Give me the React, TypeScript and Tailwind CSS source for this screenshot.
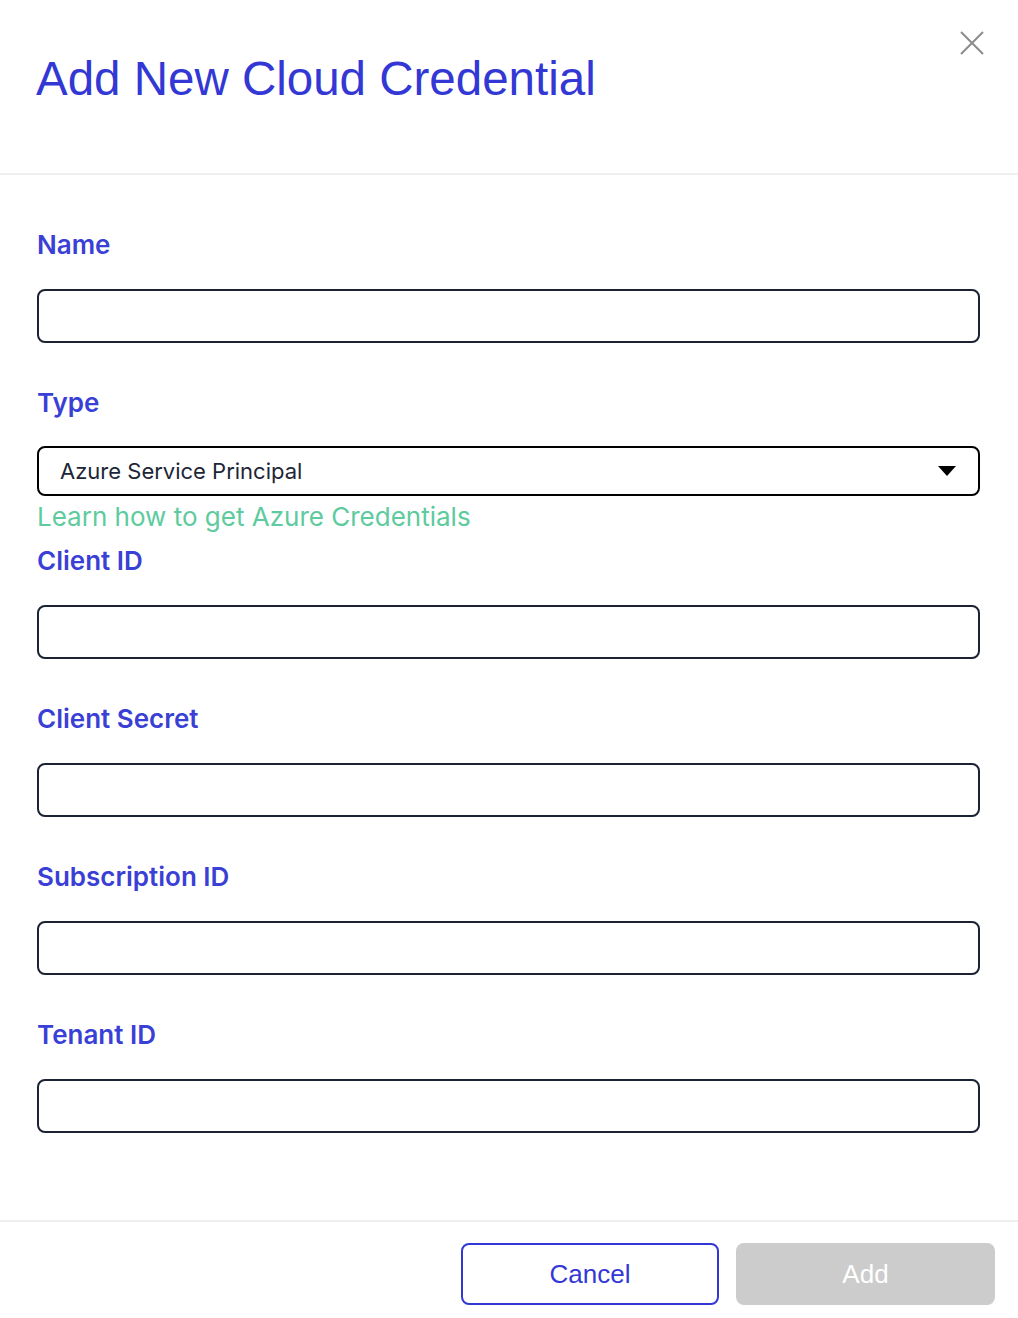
const fields = ["Client ID", "Client Secret", "Subscription ID", "Tenant ID"];

const labelCls =
  "pt-[3px] font-['Inter',sans-serif] text-[26px] font-semibold leading-8 text-[#3a3fd6]";

function TextInput() {
  return (
    <input
      type="text"
      className="block h-[54px] w-full rounded-lg border-2 border-[#1a2233] bg-white px-5 outline-none"
    />
  );
}

export default function App() {
  return (
    <div className="flex min-h-[1318px] w-full flex-col bg-white">
      <div className="relative h-[175px] border-b-2 border-[#efefef] pl-[36px] pt-[55px]">
        <h1 className="font-['Liberation_Sans',Arial,sans-serif] text-[47.5px] leading-none text-[#3338d5]">
          Add New Cloud Credential
        </h1>
        <button
          aria-label="Close"
          className="absolute right-[34px] top-[31px] text-[#8c8c8c]"
        >
          <svg width="24" height="24" viewBox="0 0 24 24" stroke="currentColor" strokeWidth="2">
            <path d="M1 1l22 22M23 1L1 23" />
          </svg>
        </button>
      </div>

      <div className="flex-1 pl-[37px] pr-[38px] pt-[51px]">
        <div className="mb-[41px]">
          <div className={`mb-[28px] ${labelCls}`}>Name</div>
          <TextInput />
        </div>

        <div className="mb-[9px]">
          <div className={`mb-[27px] ${labelCls}`}>Type</div>
          <div className="flex h-[50px] w-full items-center justify-between rounded-lg border-2 border-black pl-[21px] pr-[22px]">
            <span className="font-['Inter',sans-serif] text-[22px] text-[#1c2636]">
              Azure Service Principal
            </span>
            <svg width="18" height="11" viewBox="0 0 18 11">
              <path d="M0 0h18L9 10z" fill="#000" />
            </svg>
          </div>
          <a className="mt-[5px] block font-['Inter',sans-serif] text-[26px] leading-8 text-[#5dcb9e]">
            Learn how to get Azure Credentials
          </a>
        </div>

        {fields.map((f) => (
          <div key={f} className="mb-[41px]">
            <div className={`mb-[28px] ${labelCls}`}>{f}</div>
            <TextInput />
          </div>
        ))}
      </div>

      <div className="flex justify-end gap-[17px] border-t-2 border-[#efefef] pb-[13px] pr-[23px] pt-[21px]">
        <button className="h-[62px] w-[258px] rounded-lg border-2 border-[#3338d5] bg-white font-['Liberation_Sans',Arial,sans-serif] text-[26px] text-[#3338d5]">
          Cancel
        </button>
        <button className="h-[62px] w-[259px] rounded-lg bg-[#cccccc] font-['Liberation_Sans',Arial,sans-serif] text-[26px] text-white">
          Add
        </button>
      </div>
    </div>
  );
}
